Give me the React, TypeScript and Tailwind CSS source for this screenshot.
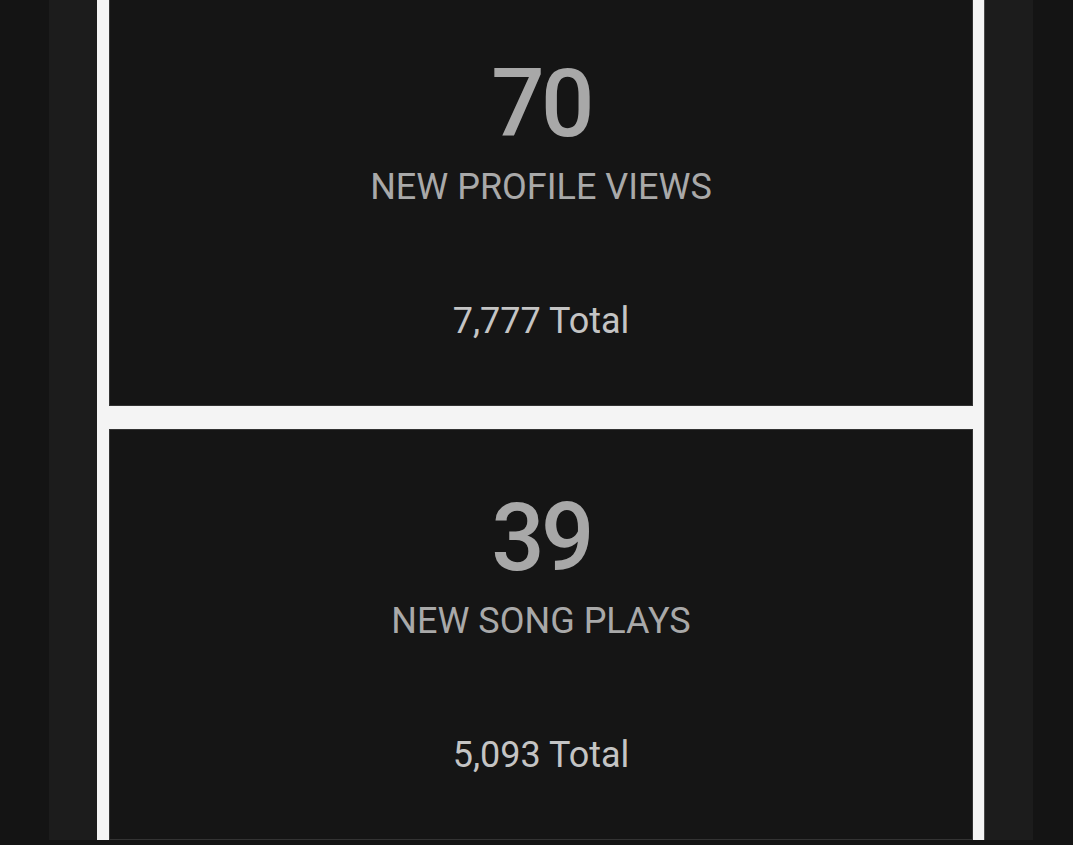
const stats = [
  { value: '70', label: 'NEW PROFILE VIEWS', total: '7,777 Total' },
  { value: '39', label: 'NEW SONG PLAYS', total: '5,093 Total' },
]

function StatCard({ value, label, total }: { value: string; label: string; total: string }) {
  return (
    <div className="flex h-[411px] flex-col items-center border border-[#333] bg-[#151515] pt-[61px] text-center">
      <div className="text-[94px] font-medium leading-none tracking-[-0.04em] text-[#a8a8a8]">{value}</div>
      <div className="mt-[18px] text-[36px] leading-none text-[#a9a9a9]">{label}</div>
      <div className="mt-[98px] text-[36px] leading-none text-[#c4c4c4]">{total}</div>
    </div>
  )
}

export default function App() {
  return (
    <div className="h-[845px] overflow-hidden bg-[#141414] font-['Roboto',_'Liberation_Sans',_sans-serif]">
      <div className="ml-[49px] h-full w-[984px] bg-[#1c1c1c] px-12">
        <div className="h-full border-r border-[#4a4a4a] bg-[#f4f4f4] pl-3 pr-[11px]">
          <div className="-mt-[5px] flex flex-col gap-[23px]">
            {stats.map((s) => (
              <StatCard key={s.label} {...s} />
            ))}
          </div>
        </div>
      </div>
    </div>
  )
}
